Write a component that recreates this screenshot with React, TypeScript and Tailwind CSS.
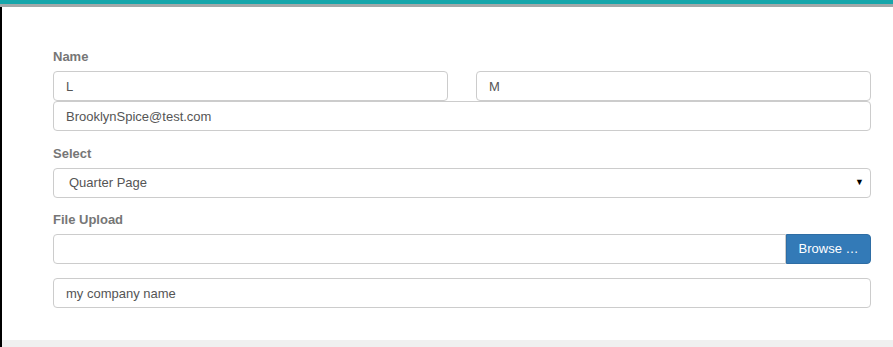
import React from 'react';

const inputCls =
  'h-[30px] w-full rounded-[4px] border border-[#cccccc] bg-white px-3 text-[13px] text-[#555555] outline-none';

const App: React.FC = () => {
  return (
    <div className="flex h-[347px] w-[893px] flex-col bg-white font-['Liberation_Sans',Arial,sans-serif]">
      <div className="h-[4px] w-full bg-[#16a6ab]" />
      <div className="h-[3px] w-full bg-[#a3a8a9]" />
      <div className="flex flex-1 flex-col border-l-2 border-black">
        <form className="flex flex-1 flex-col pl-[51px] pr-[22px] pt-[41px]">
          <label className="mb-[5px] h-[18px] text-[13px] font-bold leading-[18px] text-[#767676]">Name</label>
          <div className="flex gap-[28px]">
            <input className={inputCls} defaultValue="L" />
            <input className={inputCls} defaultValue="M" />
          </div>
          <input className={inputCls} defaultValue="BrooklynSpice@test.com" />

          <label className="mb-[5px] mt-[14px] h-[18px] text-[13px] font-bold leading-[18px] text-[#767676]">Select</label>
          <div className="relative">
            <select className={`${inputCls} appearance-none pl-[15px]`} defaultValue="quarter">
              <option value="quarter">Quarter Page</option>
            </select>
            <span className="pointer-events-none absolute right-[7px] top-[10px] text-[9px] leading-none text-black">▼</span>
          </div>

          <label className="mb-[5px] mt-[13px] h-[18px] text-[13px] font-bold leading-[18px] text-[#767676]">File Upload</label>
          <div className="flex">
            <input className={`${inputCls} rounded-r-none`} readOnly />
            <button
              type="button"
              className="h-[30px] w-[85px] shrink-0 rounded-r-[4px] border border-[#2e6da4] bg-[#337ab7] text-[13px] text-white"
            >
              Browse …
            </button>
          </div>

          <input className={`${inputCls} mt-[14px]`} defaultValue="my company name" />
        </form>
        <div className="h-[7px] w-full bg-[#f0f0f0]" />
      </div>
    </div>
  );
};

export default App;
